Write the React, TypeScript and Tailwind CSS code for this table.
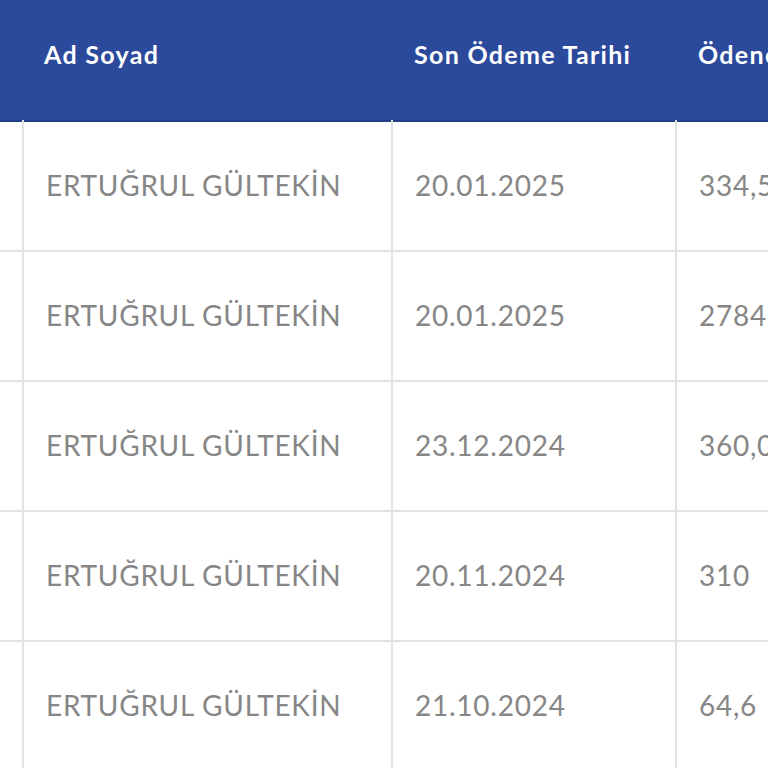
const rows = [
  { name: "ERTUĞRUL GÜLTEKİN", date: "20.01.2025", amount: "334,5" },
  { name: "ERTUĞRUL GÜLTEKİN", date: "20.01.2025", amount: "2784" },
  { name: "ERTUĞRUL GÜLTEKİN", date: "23.12.2024", amount: "360,0" },
  { name: "ERTUĞRUL GÜLTEKİN", date: "20.11.2024", amount: "310" },
  { name: "ERTUĞRUL GÜLTEKİN", date: "21.10.2024", amount: "64,6" },
];

export default function App() {
  return (
    <div className="h-[768px] w-[768px] overflow-hidden bg-white font-['Lato',sans-serif]">
      <table className="w-[900px] table-fixed border-collapse">
        <colgroup>
          <col className="w-[23px]" />
          <col className="w-[369px]" />
          <col className="w-[284px]" />
          <col className="w-[224px]" />
        </colgroup>
        <thead>
          <tr className="h-[121px] border-b-2 border-[#223f8a] bg-[#2b4a9b] text-left text-[25px] font-bold tracking-[1.3px] text-white">
            <th />
            <th className="px-[21px] pb-[10px] font-bold">Ad Soyad</th>
            <th className="px-[22px] pb-[10px] font-bold">Son Ödeme Tarihi</th>
            <th className="whitespace-nowrap px-[22px] pb-[10px] font-bold">Ödenen Tutar</th>
          </tr>
        </thead>
        <tbody className="text-[28px] tracking-[0.75px] text-[#868686]">
          {rows.map((r, i) => (
            <tr key={i} className="h-[130px] border-b-2 border-[#e2e2e2]">
              <td className="border-r-2 border-[#e2e2e2]" />
              <td className="border-r-2 border-[#e2e2e2] px-[22px] pb-[2px]">{r.name}</td>
              <td className="border-r-2 border-[#e2e2e2] px-[22px] pb-[2px]">{r.date}</td>
              <td className="border-r-2 border-[#e2e2e2] px-[22px] pb-[2px]">{r.amount}</td>
            </tr>
          ))}
        </tbody>
      </table>
    </div>
  );
}
